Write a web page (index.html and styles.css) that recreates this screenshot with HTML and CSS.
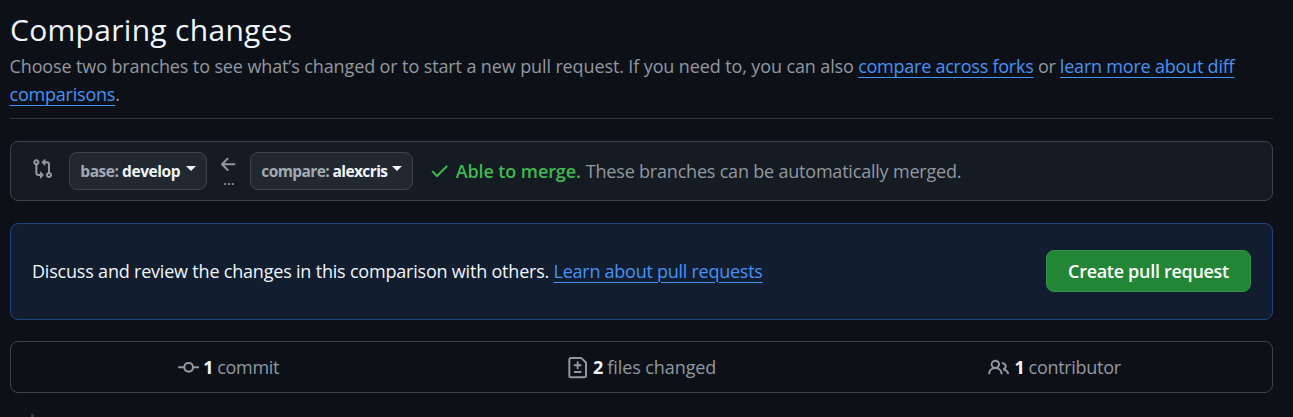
FILE: index.html
```html
<!DOCTYPE html>
<html lang="en">
<head>
<meta charset="utf-8">
<title>Comparing changes</title>
<link rel="stylesheet" href="styles.css">
</head>
<body>
<main class="page">
  <header class="head">
    <h1 class="title">Comparing changes</h1>
    <p class="lead"><span class="intro">Choose two branches to see what’s changed or to start a new pull request. If you need to, you can also</span> <a class="link l-forks">compare across forks</a> or <a class="link l-more">learn more about diff<br>comparisons</a>.</p>
  </header>

  <section class="range">
    <svg class="icon compare-icon" viewBox="0 0 16 16"><path d="M9.573.677A.25.25 0 0 1 10 .854V2.5h1A2.5 2.5 0 0 1 13.5 5v5.628a2.251 2.251 0 1 1-1.5 0V5a1 1 0 0 0-1-1h-1v1.646a.25.25 0 0 1-.427.177L7.177 3.427a.25.25 0 0 1 0-.354ZM6 12v-1.646a.25.25 0 0 1 .427-.177l2.396 2.396a.25.25 0 0 1 0 .354l-2.396 2.396A.25.25 0 0 1 6 15.146V13.5H5A2.5 2.5 0 0 1 2.5 11V5.372a2.25 2.25 0 1 1 1.5 0V11a1 1 0 0 0 1 1h1Zm6.75 0a.75.75 0 1 0 0 1.5.75.75 0 0 0 0-1.5ZM4 3.25a.75.75 0 1 0-1.5 0 .75.75 0 0 0 1.5 0Z"/></svg>
    <button class="branch base"><span><span class="kind">base:</span> <span class="ref">develop</span></span><i class="caret"></i></button>
    <div class="dir">
      <svg class="icon arrow" viewBox="0 0 16 16"><path d="M7.78 12.53a.75.75 0 0 1-1.06 0L2.47 8.28a.75.75 0 0 1 0-1.06l4.25-4.25a.751.751 0 0 1 1.042.018.751.751 0 0 1 .018 1.042L4.81 7h7.44a.75.75 0 0 1 0 1.5H4.81l2.97 2.97a.75.75 0 0 1 0 1.06Z"/></svg>
      <span class="dots">...</span>
    </div>
    <button class="branch head-ref"><span><span class="kind">compare:</span> <span class="ref">alexcris</span></span><i class="caret"></i></button>
    <svg class="icon check" viewBox="0 0 16 16"><path d="M13.78 4.22a.75.75 0 0 1 0 1.06l-7.25 7.25a.75.75 0 0 1-1.06 0L2.22 9.28a.751.751 0 0 1 .018-1.042.751.751 0 0 1 1.042-.018L6 10.94l6.72-6.72a.75.75 0 0 1 1.06 0Z"/></svg>
    <strong class="able">Able to merge.</strong>
    <span class="auto">These branches can be automatically merged.</span>
  </section>

  <section class="discuss">
    <p class="prompt"><span class="prompt-text">Discuss and review the changes in this comparison with others.</span> <a class="link l-pulls">Learn about pull requests</a></p>
    <button class="create">Create pull request</button>
  </section>

  <ul class="stats">
    <li class="stat commits"><svg class="icon stat-icon" viewBox="0 0 16 16"><path d="M11.93 8.5a4.002 4.002 0 0 1-7.86 0H.75a.75.75 0 0 1 0-1.5h3.32a4.002 4.002 0 0 1 7.86 0h3.32a.75.75 0 0 1 0 1.5Zm-1.43-.75a2.5 2.5 0 1 0-5 0 2.5 2.5 0 0 0 5 0Z"/></svg><b class="num">1</b><span class="unit">commit</span></li>
    <li class="stat files"><svg class="icon stat-icon" viewBox="0 0 16 16"><path d="M1 1.75C1 .784 1.784 0 2.75 0h7.586c.464 0 .909.184 1.237.513l2.914 2.914c.329.328.513.773.513 1.237v9.586A1.75 1.75 0 0 1 13.25 16H2.75A1.75 1.75 0 0 1 1 14.25Zm1.75-.25a.25.25 0 0 0-.25.25v12.5c0 .138.112.25.25.25h10.5a.25.25 0 0 0 .25-.25V4.664a.25.25 0 0 0-.073-.177l-2.914-2.914a.25.25 0 0 0-.177-.073ZM8 3.25a.75.75 0 0 1 .75.75v1.5h1.5a.75.75 0 0 1 0 1.5h-1.5v1.5a.75.75 0 0 1-1.5 0V7h-1.5a.75.75 0 0 1 0-1.5h1.5V4A.75.75 0 0 1 8 3.25Zm-3 8a.75.75 0 0 1 .75-.75h4.5a.75.75 0 0 1 0 1.5h-4.5a.75.75 0 0 1-.75-.75Z"/></svg><b class="num">2</b><span class="unit">files changed</span></li>
    <li class="stat people"><svg class="icon stat-icon" viewBox="0 0 16 16"><path d="M2 5.5a3.5 3.5 0 1 1 5.898 2.549 5.508 5.508 0 0 1 3.034 4.084.75.75 0 1 1-1.482.235 4 4 0 0 0-7.9 0 .75.75 0 0 1-1.482-.236A5.507 5.507 0 0 1 3.102 8.05 3.493 3.493 0 0 1 2 5.5ZM11 4a3.001 3.001 0 0 1 2.22 5.018 5.01 5.01 0 0 1 2.56 3.012.749.749 0 0 1-.885.954.752.752 0 0 1-.549-.514 3.507 3.507 0 0 0-2.522-2.372.75.75 0 0 1-.574-.73v-.352a.75.75 0 0 1 .416-.672A1.5 1.5 0 0 0 11 5.5.75.75 0 0 1 11 4Zm-5.5-.5a2 2 0 1 0-.001 3.999A2 2 0 0 0 5.5 3.5Z"/></svg><b class="num">1</b><span class="unit">contributor</span></li>
  </ul>
  <div class="timeline"></div>
</main>
</body>
</html>
```
FILE: styles.css
```css
* { box-sizing: border-box; }
html, body { margin: 0; height: 417px; overflow: hidden; background: #0d1117; }
body { font-family: "Open Sans", "Noto Sans", sans-serif; font-size: 18px; line-height: 28px; color: #9198a1; }
button { font-family: inherit; }
.page { width: 1273px; padding-left: 10px; }
.head { height: 119px; padding-top: 9px; border-bottom: 1px solid #30363d; }
.title { margin: 0 0 1px; font-size: 30px; line-height: 42px; font-weight: 400; color: #f0f6fc; letter-spacing: 0.3px; }
.lead { margin: 0 0 0 -0.5px; white-space: nowrap; letter-spacing: -0.3px; }
.intro { letter-spacing: -0.118px; }
.l-forks { letter-spacing: -0.24px; }
.l-more { letter-spacing: -0.21px; }
.link { color: #4493f8; text-decoration: underline; text-decoration-thickness: 1px; text-underline-offset: 4px; }
.icon { display: block; flex: none; width: 21.33px; height: 21.33px; fill: #9198a1; }

.range { display: flex; align-items: center; height: 60px; margin-top: 22px; padding-left: 21px; border: 1px solid #3d444d; border-radius: 8px; background: #151b23; white-space: nowrap; }
.compare-icon { margin-bottom: 5px; margin-right: 16px; }
.branch { display: flex; align-items: center; justify-content: space-between; flex: none; height: 38px; padding: 0 10px; border: 1px solid #3d444d; border-radius: 8px; background: #212830; font-size: 15.5px; font-weight: 700; line-height: 24px; letter-spacing: -0.45px; }
.base { width: 138px; }
.head-ref { width: 163px; letter-spacing: -0.6px; }
.kind { color: #a3aab3; }
.ref { color: #f0f6fc; }
.caret { width: 0; height: 0; margin-bottom: 6px; border: 5px solid transparent; border-top-color: #f0f6fc; border-bottom: 0; }
.dir { display: flex; flex-direction: column; align-items: center; width: 43px; height: 38px; padding-top: 2px; }
.dots { font-size: 14px; font-weight: 600; line-height: 14px; margin-top: -2px; }
.check { fill: #3fb950; margin: 0 5px 0 16px; }
.able { color: #3fb950; font-weight: 600; margin-right: 5px; letter-spacing: -0.1px; }
.auto { letter-spacing: -0.2px; }

.discuss { display: flex; align-items: center; justify-content: space-between; height: 97px; margin-top: 22px; padding: 0 21px 2px; border: 1px solid #1f4580; border-radius: 8px; background: #121d2f; white-space: nowrap; }
.prompt { margin: 0; color: #f0f6fc; letter-spacing: -0.26px; }
.prompt-text { letter-spacing: -0.2px; }
.create { width: 205px; height: 42px; padding: 0; border: 1px solid #369046; border-radius: 8px; background: #238636; color: #fff; font-size: 18px; font-weight: 600; letter-spacing: -0.3px; }

.stats { display: grid; grid-template-columns: 436px 390px 435px; height: 52px; margin: 21px 0 0; padding: 0; border: 1px solid #3d444d; border-radius: 8px; list-style: none; }
.stat { display: flex; align-items: center; justify-content: center; padding-right: 1px; letter-spacing: -0.3px; }
.commits .stat-icon { margin-right: 4px; }
.files { letter-spacing: -0.08px; }
.people { padding: 0; }
.stat-icon { margin-right: 5px; margin-top: 2px; }
.num { color: #f0f6fc; font-weight: 700; margin-right: 4px; }
.timeline { width: 3px; height: 3px; margin: 21px 0 0 21px; background: #30363d; }
```
